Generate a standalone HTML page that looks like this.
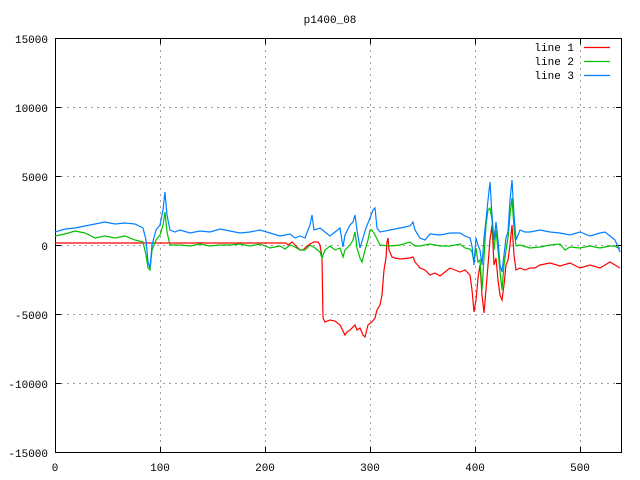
<!DOCTYPE html>
<html><head><style>html,body{margin:0;padding:0;background:#fff}svg{display:block}text{font-family:"Liberation Mono","DejaVu Sans Mono",monospace;font-size:11px;fill:#000}</style></head><body>
<svg width="640" height="480" xmlns="http://www.w3.org/2000/svg">
<rect width="640" height="480" fill="#fff"/>
<g stroke="#a0a0a0" stroke-width="1" stroke-dasharray="2,4" fill="none" shape-rendering="crispEdges">
<line x1="55" y1="107.5" x2="622" y2="107.5"/><line x1="55" y1="176.5" x2="622" y2="176.5"/><line x1="55" y1="245.5" x2="622" y2="245.5"/><line x1="55" y1="314.5" x2="622" y2="314.5"/><line x1="55" y1="383.5" x2="622" y2="383.5"/>
<line x1="160.5" y1="38" x2="160.5" y2="453"/><line x1="265.5" y1="38" x2="265.5" y2="453"/><line x1="370.5" y1="38" x2="370.5" y2="453"/><line x1="475.5" y1="38" x2="475.5" y2="453"/><line x1="580.5" y1="38" x2="580.5" y2="453"/>
</g>
<g stroke="#000" stroke-width="1" shape-rendering="crispEdges">
<rect x="55.5" y="38.5" width="566" height="414" fill="none"/>
<path d="M55 107.5h6M55 176.5h6M55 245.5h6M55 314.5h6M55 383.5h6M622 107.5h-6M622 176.5h-6M622 245.5h-6M622 314.5h-6M622 383.5h-6M160.5 453v-6M265.5 453v-6M370.5 453v-6M475.5 453v-6M580.5 453v-6M160.5 38v6M265.5 38v6M370.5 38v6M475.5 38v6M580.5 38v6"/>
</g>
<g text-anchor="end"><text x="48" y="43">15000</text><text x="48" y="112">10000</text><text x="48" y="181">5000</text><text x="48" y="250">0</text><text x="48" y="319">-5000</text><text x="48" y="388">-10000</text><text x="48" y="457">-15000</text></g>
<g text-anchor="middle"><text x="55" y="471">0</text><text x="160" y="471">100</text><text x="265" y="471">200</text><text x="370" y="471">300</text><text x="475" y="471">400</text><text x="580" y="471">500</text><text x="330" y="23">p1400_08</text></g>
<g text-anchor="end"><text x="574" y="51">line 1</text><text x="574" y="65">line 2</text><text x="574" y="79">line 3</text></g>
<g fill="none" stroke-width="1.2">
<line x1="584" y1="47.5" x2="610" y2="47.5" stroke="#ff0000"/><line x1="584" y1="61.5" x2="610" y2="61.5" stroke="#00c000"/><line x1="584" y1="75.5" x2="610" y2="75.5" stroke="#0080ff"/>
<polyline stroke="#ff0000" points="55,243 286,243 288,245 292,242 296,246 300,250 303,250 306,247 310,244 314,242 318,242 320,245 322,258 323,318 325,322 330,320 335,321 340,325 345,335 347,332 350,330 355,325 357,330 360,328 363,335 365,337 368,325 372,322 375,318 377,310 380,305 382,295 384,270 386,258 387,242 388,238 389,250 392,257 395,258 400,259 410,258 413,257 415,262 420,268 425,270 430,275 435,273 440,276 445,272 450,268 455,270 460,272 465,270 470,275 472,290 474,312 476,300 478,278 480,265 482,295 484,313 486,290 488,265 490,240 492,225 494,265 496,258 498,280 500,295 502,300 504,285 506,265 508,260 510,245 512,225 514,255 516,270 520,268 525,270 530,268 535,268 540,265 550,263 560,266 570,263 580,268 590,265 600,268 605,265 610,262 615,265 620,268"/>
<polyline stroke="#00c000" points="55,236 65,234 75,231 85,233 95,238 105,236 115,238 125,236 135,240 143,242 146,255 148,268 150,270 152,250 156,240 160,235 163,225 165,212 167,232 170,245 180,245 190,246 200,244 210,246 220,245 230,245 240,244 250,246 260,244 270,248 280,246 285,249 290,245 295,247 300,250 305,250 310,245 315,248 320,252 322,258 325,250 330,246 335,250 340,248 343,257 345,250 350,245 353,240 355,232 357,248 360,258 362,262 365,250 368,240 370,230 372,230 375,235 380,245 390,246 400,245 410,242 415,246 420,246 430,244 440,246 450,246 460,244 465,248 470,249 472,252 474,262 476,248 478,262 480,260 482,290 484,258 486,225 488,210 490,208 492,220 494,250 496,230 498,250 500,272 502,290 504,265 506,250 508,238 510,215 512,198 514,228 516,246 520,245 530,248 540,247 550,245 560,244 565,250 570,247 580,248 590,246 600,248 610,246 615,246 618,248 620,248"/>
<polyline stroke="#0080ff" points="55,232 65,229 75,228 85,226 95,224 105,222 115,224 125,223 135,224 143,228 146,240 148,262 150,268 152,245 156,230 160,225 163,210 165,192 167,215 170,230 175,232 180,230 190,233 200,231 210,232 220,229 230,231 240,233 250,232 260,230 270,233 280,236 290,234 295,238 300,236 305,238 310,225 312,215 314,230 320,228 325,232 330,236 335,232 340,228 343,247 345,235 350,225 353,222 355,215 357,230 360,248 363,238 366,228 370,218 373,210 375,208 377,228 380,232 390,230 400,228 410,226 413,222 415,230 420,238 425,240 430,234 440,235 450,233 460,233 465,236 470,238 472,246 474,265 476,238 478,245 480,250 482,265 484,238 486,220 488,200 490,182 492,215 494,240 496,222 498,240 500,265 502,272 504,255 506,238 508,232 510,200 512,180 514,215 516,240 520,230 525,232 530,232 540,230 550,232 560,233 570,235 580,232 590,236 600,233 605,232 610,236 615,240 618,247 620,252"/>
</g>
</svg>
</body></html>
